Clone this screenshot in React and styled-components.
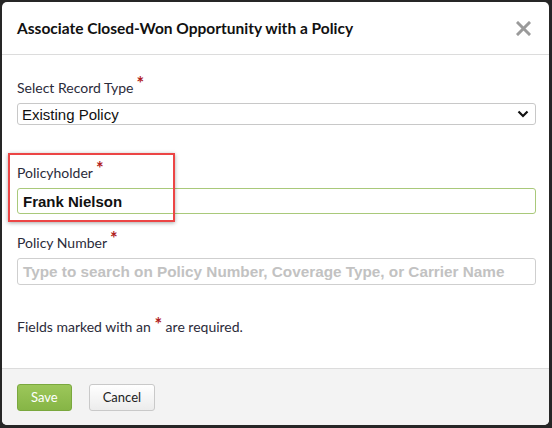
import styled, { createGlobalStyle } from "styled-components";

const GlobalStyle = createGlobalStyle`
  html, body {
    margin: 0;
    padding: 0;
    background: #262626;
  }
  body {
    font-family: Lato, "Open Sans", sans-serif;
  }
`;

const Backdrop = styled.div`
  width: 552px;
  height: 428px;
  padding: 2px 3px 3px 2px;
  box-sizing: border-box;
  background: #262626;
`;

const Modal = styled.div`
  height: 100%;
  background: #fff;
  border-radius: 5px;
  overflow: hidden;
  display: flex;
  flex-direction: column;
`;

const Header = styled.div`
  display: flex;
  align-items: center;
  justify-content: space-between;
  height: 52px;
  padding: 0 18px 0 15px;
  border-bottom: 1px solid #dcdcdc;
`;

const Title = styled.h3`
  margin: 0;
  font-family: Lato, sans-serif;
  font-size: 15.5px;
  font-weight: 700;
  color: #111;
`;

const Close = styled.button`
  border: none;
  background: none;
  padding: 0;
  width: 15px;
  height: 15px;
  display: flex;
  cursor: pointer;
`;

const Body = styled.div`
  flex: 1;
  padding: 24px 13px 0 15px;
`;

const Field = styled.div`
  margin-bottom: ${(p) => p.$gap || 0}px;
  position: relative;
`;

const Label = styled.label`
  display: block;
  font-family: Lato, sans-serif;
  font-size: 14px;
  line-height: 17px;
  color: #2b2b3a;
  margin-bottom: 7px;
`;

const Star = styled.span`
  color: #b01c1c;
  font-weight: 700;
  font-size: 18px;
  line-height: 0;
  position: relative;
  top: -3px;
  margin-left: 3px;
`;

const Select = styled.div`
  height: 20px;
  border: 1px solid #c8c8c8;
  border-radius: 3px;
  display: flex;
  align-items: center;
  justify-content: space-between;
  padding: 0 6px 0 4px;
  font-family: "Liberation Sans", Arial, sans-serif;
  font-size: 15px;
  color: #111;
`;

const Input = styled.div`
  height: ${(p) => (p.$active ? 24 : 25)}px;
  border: 1px solid ${(p) => (p.$active ? "#a9c97a" : "#cfcfcf")};
  border-radius: 3px;
  display: flex;
  align-items: center;
  padding: 0 5px;
  font-family: "Liberation Sans", Arial, sans-serif;
  font-size: ${(p) => (p.$placeholder ? 15.3 : 15)}px;
  font-weight: 700;
  color: ${(p) => (p.$placeholder ? "#c2c2c2" : "#111")};
  white-space: nowrap;
  overflow: hidden;
`;

const Highlight = styled.div`
  position: absolute;
  left: -9px;
  top: -11px;
  width: 163px;
  height: 65px;
  border: 2px solid #ec4545;
  box-shadow: 0 1px 4px rgba(0, 0, 0, 0.35);
  pointer-events: none;
`;

const Note = styled.p`
  margin: 33px 0 0;
  font-family: Lato, sans-serif;
  font-size: 14px;
  color: #2b2b3a;
`;

const InlineStar = styled.span`
  color: #b01c1c;
  font-weight: 700;
  font-size: 18px;
  line-height: 0;
  position: relative;
  top: -1px;
`;

const Footer = styled.div`
  height: 56px;
  background: #f3f3f3;
  border-top: 1px solid #dcdcdc;
  display: flex;
  align-items: center;
  gap: 17px;
  padding: 0 15px;
`;

const Button = styled.button`
  height: 27px;
  padding: 0 13px;
  border-radius: 3px;
  font-family: Lato, sans-serif;
  font-size: 13px;
  cursor: pointer;
  border: 1px solid ${(p) => (p.$primary ? "#7aa83e" : "#c9c9c9")};
  color: ${(p) => (p.$primary ? "#fff" : "#222")};
  background: ${(p) =>
    p.$primary
      ? "linear-gradient(#9cc75a, #86b546)"
      : "linear-gradient(#ffffff, #ececec)"};
`;

export default function App() {
  return (
    <Backdrop>
      <GlobalStyle />
      <Modal>
        <Header>
          <Title>Associate Closed-Won Opportunity with a Policy</Title>
          <Close aria-label="Close">
            <svg width="15" height="15" viewBox="0 0 15 15">
              <path d="M2 2 L13 13 M13 2 L2 13" stroke="#9a9a9a" strokeWidth="3" strokeLinecap="square" />
            </svg>
          </Close>
        </Header>
        <Body>
          <Field $gap={39}>
            <Label>
              Select Record Type<Star>*</Star>
            </Label>
            <Select>
              Existing Policy
              <svg width="12" height="8" viewBox="0 0 12 8">
                <path d="M1.5 1.5 L6 6 L10.5 1.5" stroke="#111" strokeWidth="2.2" fill="none" />
              </svg>
            </Select>
          </Field>
          <Field $gap={20}>
            <Highlight />
            <Label>
              Policyholder<Star>*</Star>
            </Label>
            <Input $active>Frank Nielson</Input>
          </Field>
          <Field>
            <Label>
              Policy Number<Star>*</Star>
            </Label>
            <Input $placeholder>Type to search on Policy Number, Coverage Type, or Carrier Name</Input>
          </Field>
          <Note>
            Fields marked with an <InlineStar>*</InlineStar> are required.
          </Note>
        </Body>
        <Footer>
          <Button $primary>Save</Button>
          <Button>Cancel</Button>
        </Footer>
      </Modal>
    </Backdrop>
  );
}
